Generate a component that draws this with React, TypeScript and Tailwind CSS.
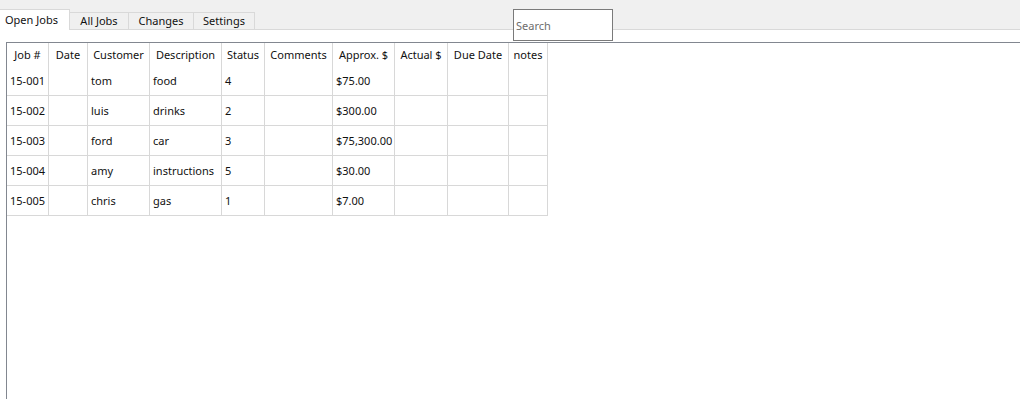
import React from "react";

const TABS = [
  { label: "Open Jobs", width: "w-[70px]", active: true },
  { label: "All Jobs", width: "w-[59px]", active: false },
  { label: "Changes", width: "w-[65px]", active: false },
  { label: "Settings", width: "w-[61px]", active: false },
];

const COLUMNS = [
  "Job #",
  "Date",
  "Customer",
  "Description",
  "Status",
  "Comments",
  "Approx. $",
  "Actual $",
  "Due Date",
  "notes",
];

const JOBS = [
  ["15-001", "", "tom", "food", "4", "", "$75.00", "", "", ""],
  ["15-002", "", "luis", "drinks", "2", "", "$300.00", "", "", ""],
  ["15-003", "", "ford", "car", "3", "", "$75,300.00", "", "", ""],
  ["15-004", "", "amy", "instructions", "5", "", "$30.00", "", "", ""],
  ["15-005", "", "chris", "gas", "1", "", "$7.00", "", "", ""],
];

const GRID_COLS =
  "grid grid-cols-[42px_39px_62px_72px_43px_68px_62px_53px_61px_39px] w-[541px]";

export default function App() {
  return (
    <div className="relative w-[1020px] h-[399px] overflow-hidden bg-white font-['Noto_Sans','Liberation_Sans',sans-serif] text-[#111]">
      {/* tab strip */}
      <div className="flex h-[30px] items-end border-b border-[#d9d9d9] bg-[#f0f0f0]">
        {TABS.map((t) =>
          t.active ? (
            <div
              key={t.label}
              className={`${t.width} -mb-px flex h-[21px] items-center border-t border-r border-[#d9d9d9] bg-white pl-[5px] text-[11px]`}
            >
              {t.label}
            </div>
          ) : (
            <div
              key={t.label}
              className={`${t.width} flex h-[17px] items-center justify-center border-t border-r border-[#d9d9d9] pt-[1px] text-[11px]`}
            >
              {t.label}
            </div>
          )
        )}
      </div>

      {/* search box */}
      <div className="absolute left-[513px] top-[9px] flex h-[32px] w-[100px] items-center border border-[#7a7a7a] bg-white pl-[2px] pt-[3px] text-[11px] text-[#6d6d6d]">
        Search
      </div>

      {/* grid view */}
      <div className="pt-[12px] pl-[6px]">
        <div className="h-[400px] border-t border-l border-[#828790]">
          <div className={GRID_COLS}>
            {COLUMNS.map((c) => (
              <div
                key={c}
                className="flex h-[23px] items-center justify-center whitespace-nowrap border-r border-[#d8d8d8] pt-[2px] text-[11px]"
              >
                {c}
              </div>
            ))}
          </div>
          {JOBS.map((row) => (
            <div key={row[0]} className={GRID_COLS}>
              {row.map((cell, i) => (
                <div
                  key={i}
                  className="flex h-[30px] items-center whitespace-nowrap border-r border-b border-[#d8d8d8] pl-[3px] pt-[2px] text-[11px]"
                >
                  {cell}
                </div>
              ))}
            </div>
          ))}
        </div>
      </div>
    </div>
  );
}
